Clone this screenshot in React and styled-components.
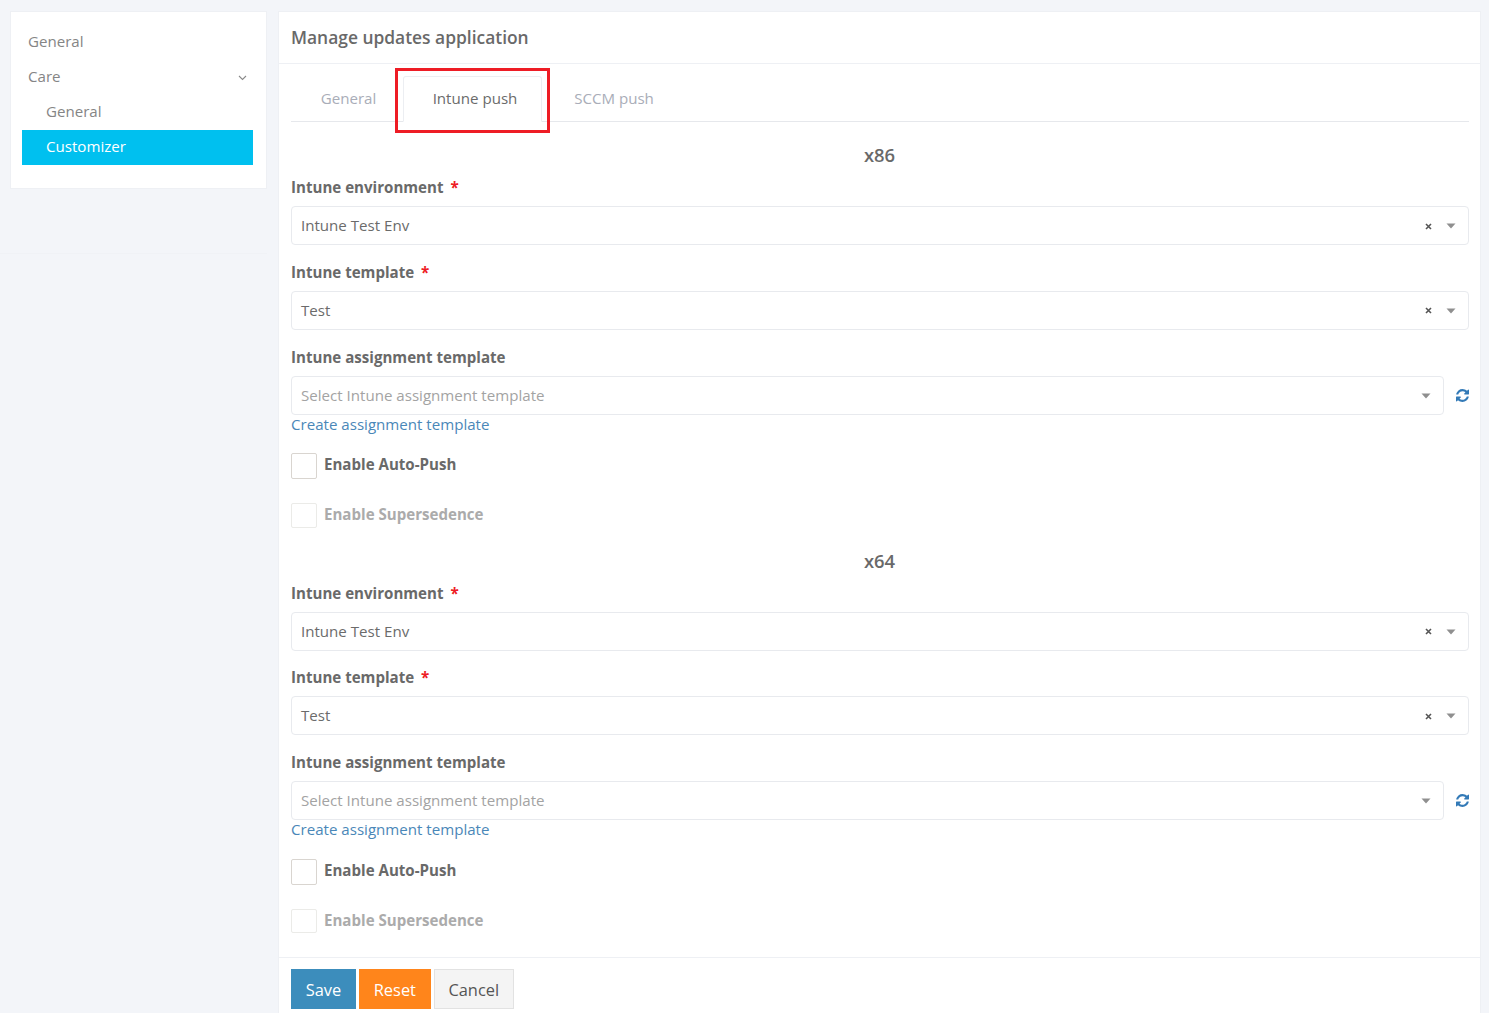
import React from 'react';
import styled, { createGlobalStyle } from 'styled-components';

const GlobalStyle = createGlobalStyle`
  html, body {
    margin: 0;
    height: 100%;
    overflow: hidden;
    background: #f3f5f9;
    font-family: "Open Sans", "Liberation Sans", sans-serif;
    color: #6b6b6b;
  }
  * { box-sizing: border-box; }
`;

function CaretDown() {
  return (
    <svg width="10" height="6" viewBox="0 0 10 6" aria-hidden="true">
      <path d="M0.5 0.5h9L5 5.5z" fill="#8f8f8f" />
    </svg>
  );
}

function ClearIcon() {
  return (
    <svg width="7" height="7" viewBox="0 0 7 7" aria-hidden="true">
      <path d="M1 1l5 5M6 1L1 6" stroke="#555" strokeWidth="1.6" fill="none" />
    </svg>
  );
}

function RefreshIcon() {
  return (
    <svg width="13" height="13" viewBox="0 0 1536 1536" aria-hidden="true">
      <path
        fill="#337ab7"
        d="M1511 928q0 5-1 7-64 268-268 434.5T764 1536q-146 0-282.5-55T238 1324l-129 129q-19 19-45 19t-45-19-19-45V960q0-26 19-45t45-19h448q26 0 45 19t19 45-19 45l-137 137q71 66 161 102t187 36q134 0 250-65t186-179q11-17 53-117 8-23 30-23h192q13 0 22.5 9.5t9.5 22.5zm25-800v448q0 26-19 45t-45 19h-448q-26 0-45-19t-19-45 19-45l138-138Q969 256 768 256q-134 0-250 65T332 500q-11 17-53 117-8 23-30 23H50q-13 0-22.5-9.5T18 608v-7q65-268 270-434.5T768 0q146 0 284 55.5T1297 212l130-129q19-19 45-19t45 19 19 45z"
      />
    </svg>
  );
}

function ChevronDown() {
  return (
    <svg width="9" height="6" viewBox="0 0 9 6" aria-hidden="true">
      <path d="M1 1l3.5 3.5L8 1" stroke="#8a8a8a" strokeWidth="1.1" fill="none" />
    </svg>
  );
}

function Select({ value, placeholder, clearable }) {
  return (
    <SelectBox>
      <SelectText $placeholder={!value}>{value || placeholder}</SelectText>
      {clearable && <ClearSlot><ClearIcon /></ClearSlot>}
      <CaretSlot><CaretDown /></CaretSlot>
    </SelectBox>
  );
}

function ArchSection({ arch }) {
  return (
    <Section>
      <ArchTitle>{arch}</ArchTitle>
      <Field>
        <FieldLabel>Intune environment <Required>*</Required></FieldLabel>
        <Select value="Intune Test Env" clearable />
      </Field>
      <Field>
        <FieldLabel>Intune template <Required>*</Required></FieldLabel>
        <Select value="Test" clearable />
      </Field>
      <FieldLabel>Intune assignment template</FieldLabel>
      <SelectRow>
        <Select placeholder="Select Intune assignment template" />
        <RefreshSlot><RefreshIcon /></RefreshSlot>
      </SelectRow>
      <CreateLink href="#">Create assignment template</CreateLink>
      <CheckRow>
        <CheckBox />
        <CheckLabel>Enable Auto-Push</CheckLabel>
      </CheckRow>
      <CheckRow $disabled>
        <CheckBox $disabled />
        <CheckLabel $disabled>Enable Supersedence</CheckLabel>
      </CheckRow>
    </Section>
  );
}

export default function App() {
  return (
    <Page>
      <GlobalStyle />
      <SideColumn>
        <SideCard>
          <SideItem>General</SideItem>
          <SideItem>Care<ChevronDown /></SideItem>
          <SideItem $sub>General</SideItem>
          <SideItem $sub $active>Customizer</SideItem>
        </SideCard>
      </SideColumn>
      <MainCard>
        <Header>Manage updates application</Header>
        <Body>
          <Tabs>
            <Tab $width="112px" $pad="3px">General</Tab>
            <Tab $width="139px" $pad="5px" $active>
              Intune push
              <Highlight />
            </Tab>
            <Tab $width="144px">SCCM push</Tab>
          </Tabs>
          <ArchSection arch="x86" />
          <ArchSection arch="x64" />
        </Body>
        <Footer>
          <Button $bg="#3c8dbc" $fg="#fff">Save</Button>
          <Button $bg="#ff851b" $fg="#fff">Reset</Button>
          <Button $bg="#f4f4f4" $fg="#555" $border="#e2e2e2">Cancel</Button>
        </Footer>
      </MainCard>
    </Page>
  );
}

const Page = styled.div`
  display: flex;
  align-items: flex-start;
  gap: 11px;
  height: 1013px;
  padding: 11px 8px 0 10px;
  overflow: hidden;
`;

const SideColumn = styled.div`
  flex: 0 0 257px;
  height: 243px;
  position: relative;

  &::after {
    content: '';
    position: absolute;
    left: -10px;
    right: 0;
    bottom: 0;
    height: 1px;
    background: #f0f2f6;
  }
`;

const SideCard = styled.div`
  height: 178px;
  background: #fff;
  border: 1px solid #eef0f4;
  padding: 13px 13px 0 11px;
`;

const SideItem = styled.div`
  display: flex;
  align-items: center;
  justify-content: space-between;
  height: 35px;
  padding: 0 6px 3px ${({ $sub }) => ($sub ? '24px' : '6px')};
  font-size: 15.1px;
  color: ${({ $active }) => ($active ? '#fff' : '#858585')};
  background: ${({ $active }) => ($active ? '#00c0ef' : 'transparent')};

  svg {
    margin-top: 3px;
  }
`;

const MainCard = styled.div`
  flex: 1;
  height: 1010px;
  background: #fff;
  border: 1px solid #eef0f4;
  display: flex;
  flex-direction: column;
`;

const Header = styled.div`
  flex: 0 0 52px;
  display: flex;
  align-items: center;
  padding: 0 12px 2px;
  font-size: 17.4px;
  font-weight: 600;
  color: #696969;
  border-bottom: 1px solid #eef0f4;
`;

const Body = styled.div`
  flex: 0 0 894px;
  padding: 12px 11px 0 12px;
  border-bottom: 1px solid #eef0f4;
`;

const Tabs = styled.div`
  display: flex;
  align-items: flex-start;
  height: 46px;
  border-bottom: 1px solid #e6e8ec;
`;

const Tab = styled.div`
  position: relative;
  display: flex;
  align-items: center;
  justify-content: center;
  width: ${({ $width }) => $width};
  height: ${({ $active }) => ($active ? '46px' : '45px')};
  padding: 0 0 2px ${({ $pad }) => $pad || '0'};
  font-size: 15.1px;
  color: ${({ $active }) => ($active ? '#6b6b6b' : '#a9adb8')};
  ${({ $active }) =>
    $active &&
    `
    background: #fff;
    border: 1px solid #eceef2;
    border-bottom: 1px solid #fff;
    border-radius: 3px 3px 0 0;
  `}
`;

const Highlight = styled.span`
  position: absolute;
  top: -9px;
  left: -9px;
  width: 155px;
  height: 65px;
  border: 3px solid #ee1c25;
  pointer-events: none;
`;

const Section = styled.div`
  padding-top: 20px;
`;

const ArchTitle = styled.div`
  height: 25px;
  margin-bottom: 10px;
  padding-right: 1px;
  text-align: center;
  font-size: 18.4px;
  line-height: 25px;
  font-weight: 600;
  color: #696969;
`;

const Field = styled.div`
  margin-bottom: 16.75px;
`;

const FieldLabel = styled.div`
  height: 22px;
  margin-bottom: 7px;
  font-size: 15.1px;
  line-height: 21.6px;
  font-weight: 700;
  color: #696969;
`;

const Required = styled.span`
  color: #ee1c25;
  margin-left: 3px;
`;

const SelectBox = styled.div`
  flex: 1;
  display: flex;
  align-items: center;
  height: 39px;
  padding: 0 8px 0 9px;
  background: #fff;
  border: 1px solid #e8eaee;
  border-radius: 4px;
`;

const SelectText = styled.div`
  flex: 1;
  padding-bottom: 1px;
  font-size: 15.1px;
  color: ${({ $placeholder }) => ($placeholder ? '#a3a3a3' : '#6b6b6b')};
`;

const ClearSlot = styled.span`
  display: flex;
  margin: 1px 14.5px 0 0;
`;

const CaretSlot = styled.span`
  display: flex;
  margin: 1px 4px 0 0;
`;

const SelectRow = styled.div`
  display: flex;
  align-items: center;
`;

const RefreshSlot = styled.span`
  flex: 0 0 25px;
  display: flex;
  justify-content: flex-end;
`;

const CreateLink = styled.a`
  display: block;
  height: 20px;
  font-size: 15.1px;
  line-height: 18px;
  color: #4a87b8;
  text-decoration: none;
`;

const CheckRow = styled.div`
  display: flex;
  align-items: flex-start;
  gap: 7.5px;
  margin-top: ${({ $disabled }) => ($disabled ? '24px' : '18.5px')};
  height: ${({ $disabled }) => ($disabled ? '24.5px' : '26px')};
`;

const CheckBox = styled.span`
  flex: 0 0 25.5px;
  height: 100%;
  background: #fff;
  border: 1px solid ${({ $disabled }) => ($disabled ? '#ebebe8' : '#d9d5d0')};
  border-radius: 2px;
`;

const CheckLabel = styled.span`
  font-size: 15.1px;
  line-height: 22px;
  font-weight: 700;
  color: ${({ $disabled }) => ($disabled ? '#ababab' : '#696969')};
`;

const Footer = styled.div`
  display: flex;
  gap: 3px;
  padding: 11px 12px 0;
`;

const Button = styled.div`
  display: flex;
  align-items: center;
  justify-content: center;
  height: 40px;
  padding: 0 13.75px;
  font-size: 16.4px;
  color: ${({ $fg }) => $fg};
  background: ${({ $bg }) => $bg};
  border: 1px solid ${({ $border, $bg }) => $border || $bg};
`;
